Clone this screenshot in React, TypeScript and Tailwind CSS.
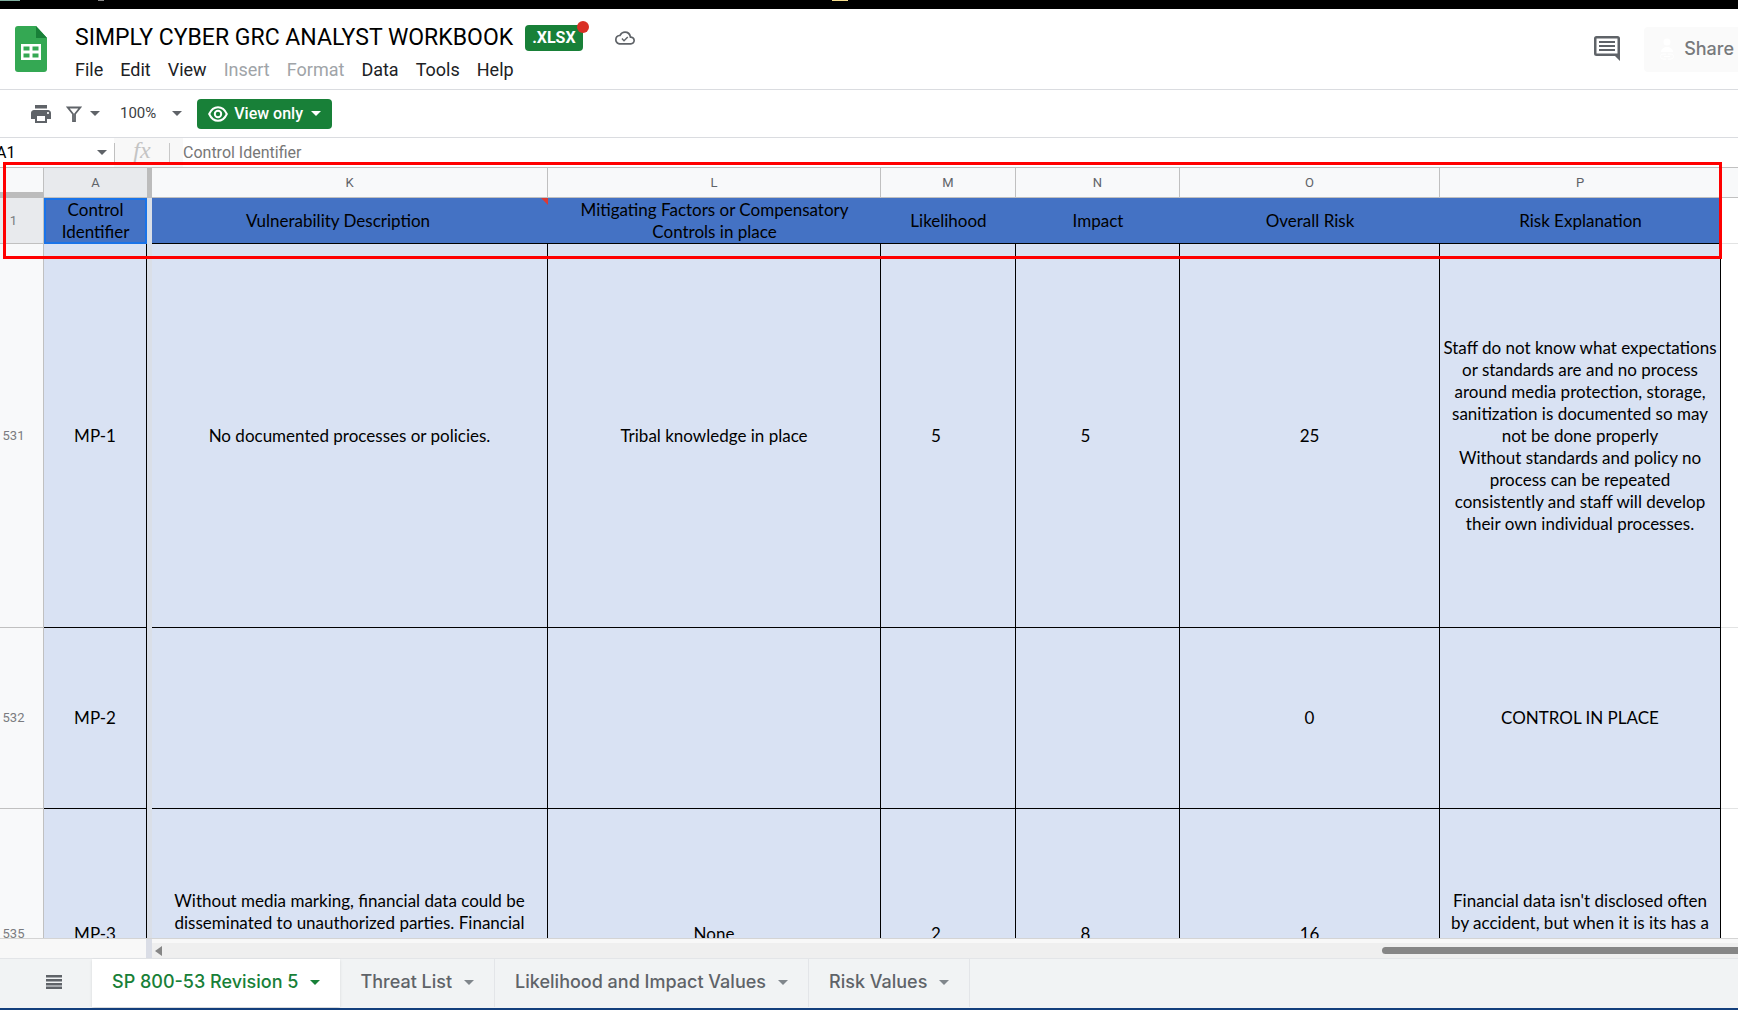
import React from "react";

const Caret = ({ className = "" }: { className?: string }) => (
  <svg viewBox="0 0 10 5" className={`h-[5px] w-[10px] shrink-0 ${className}`} fill="currentColor" aria-hidden="true">
    <path d="M0 0h10L5 5z" />
  </svg>
);

const SheetsLogo = () => (
  <svg viewBox="0 0 32 46" className="h-[46px] w-8" aria-hidden="true">
    <path d="M3 0h18l11 12v31a3 3 0 0 1-3 3H3a3 3 0 0 1-3-3V3a3 3 0 0 1 3-3z" fill="#34a853" />
    <path d="M21 0l11 12H21z" fill="#188038" />
    <path d="M6 18h20v16H6z" fill="#fff" />
    <path d="M8.500 20.500h6v4h-6zM17.500 20.500h6v4h-6zM8.500 27.500h6v4h-6zM17.500 27.500h6v4h-6z" fill="#34a853" />
  </svg>
);

const CloudDone = () => (
  <svg viewBox="0 0 24 24" className="size-5" fill="#5f6368" aria-hidden="true">
    <path d="M19.350 10.040A7.490 7.490 0 0 0 12 4C9.110 4 6.600 5.640 5.350 8.040A5.994 5.994 0 0 0 0 14c0 3.310 2.690 6 6 6h13c2.760 0 5-2.240 5-5 0-2.640-2.050-4.780-4.650-4.960zM19 18H6c-2.210 0-4-1.790-4-4 0-2.050 1.530-3.760 3.560-3.970l1.070-.110.500-.950A5.469 5.469 0 0 1 12 6c2.620 0 4.880 1.860 5.390 4.430l.300 1.500 1.530.110A2.980 2.980 0 0 1 22 15c0 1.650-1.350 3-3 3zm-8.200-4l-1.900-1.900-1.200 1.200 3.100 3.100 5.100-5.100-1.200-1.200z" />
  </svg>
);

const CommentIcon = () => (
  <svg viewBox="0 0 26 26" className="size-[26px]" aria-hidden="true">
    <path fill="#5f6368" fillRule="evenodd" d="M2.500 0h21A2.500 2.500 0 0 1 26 2.500V25l-5-5H2.500A2.500 2.500 0 0 1 0 17.500V2.500A2.500 2.500 0 0 1 2.500 0zM2.500 2.500v15h21v-15z" />
    <path fill="#5f6368" d="M5 5h16v2H5zM5 9h16v2H5zM5 13h16v2H5z" />
  </svg>
);

const PersonLink = () => (
  <svg viewBox="0 0 18 22" className="h-[22px] w-[18px]" aria-hidden="true">
    <circle cx="9" cy="4" r="3.500" fill="#fff" />
    <path d="M3 14c0-3 3-5 6-5s6 2 6 5z" fill="#fff" />
    <path d="M8 16H5a2.500 2.500 0 0 0 0 5h3m2-5h3a2.500 2.500 0 0 1 0 5h-3m-4-2.500h6" fill="none" stroke="#fff" />
  </svg>
);

const PrintIcon = () => (
  <svg viewBox="2 3 20 18" className="h-[18px] w-5" fill="#5f6368" aria-hidden="true">
    <path d="M19 8H5c-1.660 0-3 1.340-3 3v6h4v4h12v-4h4v-6c0-1.660-1.340-3-3-3zm-3 11H8v-5h8v5zm3-7c-.550 0-1-.450-1-1s.450-1 1-1 1 .450 1 1-.450 1-1 1zm-1-9H6v3.500h12V3z" />
  </svg>
);

const FilterIcon = () => (
  <svg viewBox="0 0 16 16" className="size-4" aria-hidden="true">
    <path d="M1.800 1.500h12.400L9 8v7.500H7V8z" fill="none" stroke="#5f6368" strokeWidth="1.800" />
  </svg>
);

const EyeIcon = () => (
  <svg viewBox="0 0 20 16" className="h-4 w-5" aria-hidden="true">
    <path d="M1.200 8C3 4 6.200 1.200 10 1.200S17 4 18.800 8C17 12 13.800 14.800 10 14.800S3 12 1.200 8z" fill="none" stroke="#fff" strokeWidth="2" />
    <circle cx="10" cy="8" r="3.200" fill="none" stroke="#fff" strokeWidth="2" />
  </svg>
);

const menus = [
  { label: "File" },
  { label: "Edit" },
  { label: "View" },
  { label: "Insert", off: true },
  { label: "Format", off: true },
  { label: "Data" },
  { label: "Tools" },
  { label: "Help" },
];

const letters = ["K", "L", "M", "N", "O", "P"];
const headings = [
  "Vulnerability Description",
  "Mitigating Factors or Compensatory Controls in place",
  "Likelihood",
  "Impact",
  "Overall Risk",
  "Risk Explanation",
];

type Row = { n: string; id: string; height: string; cells: string[] };

const rows: Row[] = [
  {
    n: "531",
    id: "MP-1",
    height: "h-96",
    cells: [
      "No documented processes or policies.",
      "Tribal knowledge in place",
      "5",
      "5",
      "25",
      "Staff do not know what expectations\nor standards are and no process\naround media protection, storage,\nsanitization is documented so may\nnot be done properly\nWithout standards and policy no\nprocess can be repeated\nconsistently and staff will develop\ntheir own individual processes.",
    ],
  },
  { n: "532", id: "MP-2", height: "h-[181px]", cells: ["", "", "", "", "0", "CONTROL IN PLACE"] },
  {
    n: "535",
    id: "MP-3",
    height: "h-[250px]",
    cells: [
      "Without media marking, financial data could be\ndisseminated to unauthorized parties. Financial\n\n\n",
      "None",
      "2",
      "8",
      "16",
      "Financial data isn't disclosed often\nby accident, but when it is its has a\n\n\n",
    ],
  },
];

const tabs = ["SP 800-53 Revision 5", "Threat List", "Likelihood and Impact Values", "Risk Values"];

export default function App() {
  return (
    <div className="flex h-screen flex-col overflow-hidden bg-white font-['Roboto',sans-serif] text-[#202124]">
      <div className="flex h-[9px] shrink-0 items-start bg-black">
        <span className="h-px w-5 bg-[#7fae9e]" />
        <span className="ml-[78px] h-px w-1.5 bg-[#8a8a8a]" />
        <span className="ml-[728px] h-px w-4 bg-[#f5dc8c]" />
      </div>

      <header className="flex h-[81px] shrink-0 border-b border-[#dadce0]">
        <a href="#home" aria-label="Sheets home" className="mt-[17px] ml-[15px] h-[46px] w-8 shrink-0">
          <SheetsLogo />
        </a>
        <div className="ml-7 flex flex-col">
          <div className="mt-[13px] flex h-8 items-center">
            <h1 className="text-[23px] leading-8 whitespace-nowrap text-black">SIMPLY CYBER GRC ANALYST WORKBOOK</h1>
            <span className="relative ml-3 flex h-[26px] items-center rounded bg-[#188038] px-[7px] text-base font-bold text-white">
              .XLSX
              <span className="absolute -top-1 -right-1.5 size-3 rounded-full bg-[#d93025]" />
            </span>
            <button type="button" aria-label="Document status" className="ml-8">
              <CloudDone />
            </button>
          </div>
          <nav className="flex h-8 items-center gap-[17px]">
            {menus.map((m) => (
              <button
                key={m.label}
                type="button"
                disabled={m.off}
                className={m.off ? "text-lg leading-6 text-[#a0a4a8]" : "text-lg leading-6"}
              >
                {m.label}
              </button>
            ))}
          </nav>
        </div>
        <div className="ml-auto flex items-start">
          <button type="button" aria-label="Open comment history" className="mt-[27px] mr-6">
            <CommentIcon />
          </button>
          <button
            type="button"
            className="mt-[18px] flex h-[45px] items-center gap-2 rounded-l bg-[#fafafa] pr-1 pb-0.5 pl-3.5 font-['Inter',sans-serif] text-lg font-medium text-[#77797c]"
          >
            <PersonLink />
            Share
          </button>
        </div>
      </header>

      <div className="flex h-12 shrink-0 items-center border-b border-[#dadce0] pl-[31px] text-[#5f6368]">
        <button type="button" aria-label="Print">
          <PrintIcon />
        </button>
        <button type="button" aria-label="Filter views" className="ml-[15px] flex items-center gap-2">
          <FilterIcon />
          <Caret />
        </button>
        <button type="button" aria-label="Zoom" className="ml-5 flex items-center gap-4 text-[15px] text-[#3c4043]">
          100%
          <Caret className="text-[#5f6368]" />
        </button>
        <button
          type="button"
          className="ml-[15px] flex h-[30px] items-center gap-1.5 rounded bg-[#188038] px-[11px] text-base font-medium text-white"
        >
          <EyeIcon />
          View only
          <Caret className="ml-0.5" />
        </button>
      </div>

      <div className="flex h-[29px] shrink-0 items-center overflow-hidden text-base">
        <button type="button" aria-label="Name box" className="-ml-1 flex w-[111px] items-center justify-between text-black">
          A1
          <Caret className="text-[#5f6368]" />
        </button>
        <div className="ml-[7px] flex h-full w-[69px] items-center justify-between bg-[#f8f8f8] pr-[13px]">
          <span className="h-5 w-px bg-[#c0c0c0]" />
          <span className="pb-1.5 font-['Liberation_Serif',serif] text-2xl leading-6 text-[#c4c4c4] italic">fx</span>
          <span className="h-5 w-px bg-[#c8c8c8]" />
        </div>
        <input
          aria-label="Formula"
          readOnly
          value="Control Identifier"
          className="min-w-0 flex-1 bg-transparent text-[#777777] outline-none"
        />
      </div>

      <main className="relative min-h-0 flex-1">
        <div className="h-full overflow-hidden border-t border-[#c0c0c0]">
          <table className="w-full table-fixed border-separate border-spacing-0 text-center font-['Lato',sans-serif] text-[17px] leading-[22px] text-black">
            <colgroup>
              <col className="w-11" />
              <col className="w-[103px]" />
              <col className="w-[5px]" />
              <col className="w-[396px]" />
              <col className="w-[333px]" />
              <col className="w-[135px]" />
              <col className="w-[164px]" />
              <col className="w-[260px]" />
              <col className="w-[281px]" />
              <col />
            </colgroup>
            <thead>
              <tr className="h-[30px] bg-[#f8f9fa] font-['Roboto',sans-serif] text-[13px] text-[#5f6368]">
                <td className="border-r border-b-[6px] border-[#bcbcbc] border-r-[#c0c0c0] p-0" />
                <th className="border-b border-[#c0c0c0] bg-[#e8eaed] p-0 font-normal">A</th>
                <td className="bg-[#bcbcbc] p-0" />
                {letters.map((l) => (
                  <th key={l} className="border-r border-b border-[#c0c0c0] p-0 font-normal">
                    {l}
                  </th>
                ))}
                <td className="border-b border-[#c0c0c0] p-0" />
              </tr>
              <tr className="h-[46px]">
                <th className="border-r border-b border-[#c0c0c0] bg-[#e8eaed] p-0 pr-4 font-['Roboto',sans-serif] text-[13px] font-normal text-[#7a7c80]">
                  1
                </th>
                <th className="bg-[#4472c4] p-0 font-normal ring-2 ring-[#1a73e8] ring-inset">Control Identifier</th>
                <td className="bg-[#dadfe8] p-0" />
                {headings.map((h, i) => (
                  <th
                    key={h}
                    className={
                      i === 0
                        ? "relative border-b border-black bg-[#4472c4] py-0 pr-12 pl-6 font-normal"
                        : "border-b border-black bg-[#4472c4] px-6 py-0 font-normal"
                    }
                  >
                    {h}
                    {i === 0 && (
                      <svg viewBox="0 0 7 7" className="absolute top-0 right-0 size-[7px]" aria-hidden="true">
                        <path d="M0 0h7v7z" fill="#db3a34" />
                      </svg>
                    )}
                  </th>
                ))}
                <td className="border-b border-[#e2e3e3] p-0" />
              </tr>
            </thead>
            <tbody>
              {rows.map((r) => (
                <tr key={r.n} className={r.height}>
                  <th className="border-r border-b border-[#c0c0c0] bg-[#f8f9fa] p-0 pr-4 font-['Roboto',sans-serif] text-[13px] font-normal text-[#7a7c80]">
                    {r.n}
                  </th>
                  <td className="border-r border-b border-black bg-[#d9e2f3] p-0">{r.id}</td>
                  <td className="bg-[#dadfe8] p-0" />
                  {r.cells.map((c, i) => (
                    <td
                      key={i}
                      className={
                        i === 2 || i === 3
                          ? "border-r border-b border-black bg-[#d9e2f3] p-0 pr-6"
                          : "border-r border-b border-black bg-[#d9e2f3] p-0 whitespace-pre"
                      }
                    >
                      {c}
                    </td>
                  ))}
                  <td className="border-b border-[#e2e3e3] p-0" />
                </tr>
              ))}
            </tbody>
          </table>
        </div>
        <div className="pointer-events-none absolute -top-[5px] right-4 left-[3px] h-[97px] border-[3px] border-[#ff0000]" />
      </main>

      <div className="flex h-5 shrink-0 border-t border-[#d4d4d4] bg-[#f8f8f8]">
        <div className="w-[146px] shrink-0" />
        <div className="w-1.5 shrink-0 bg-[#dadde6]" />
        <div className="mt-1 flex flex-1 items-center bg-[#efefef] pl-[3px]">
          <svg viewBox="0 0 7 10" className="h-2.5 w-[7px]" aria-hidden="true">
            <path d="M7 0v10L0 5z" fill="#868686" />
          </svg>
          <div className="ml-auto h-[7px] w-[356px] rounded-l-full bg-[#868686]" />
        </div>
      </div>

      <footer className="flex h-[50px] shrink-0 border-t border-[#e3e5e8] bg-[#f1f3f4] pb-px font-['Inter',sans-serif] text-[#5f6368]">
        <button type="button" aria-label="All sheets" className="flex w-[92px] items-center pb-0.5 pl-[46px]">
          <svg viewBox="0 0 16 14" className="h-3.5 w-4" fill="#5f6368" aria-hidden="true">
            <path d="M0 0h16v2.500H0zM0 4h16v2.500H0zM0 8h16v2.500H0zM0 11.500h16V14H0z" />
          </svg>
        </button>
        {tabs.map((t, i) => (
          <button
            key={t}
            type="button"
            className={
              i === 0
                ? "flex items-center gap-3 bg-white px-5 pb-0.5 text-lg font-medium text-[#188038] shadow"
                : "flex items-center gap-3 border-r border-[#e3e5e8] px-5 pb-0.5 text-lg font-medium"
            }
          >
            {t}
            <Caret className={i === 0 ? "" : "text-[#80868b]"} />
          </button>
        ))}
      </footer>
      <div className="h-0.5 shrink-0 bg-[#133f7c]" />
    </div>
  );
}
